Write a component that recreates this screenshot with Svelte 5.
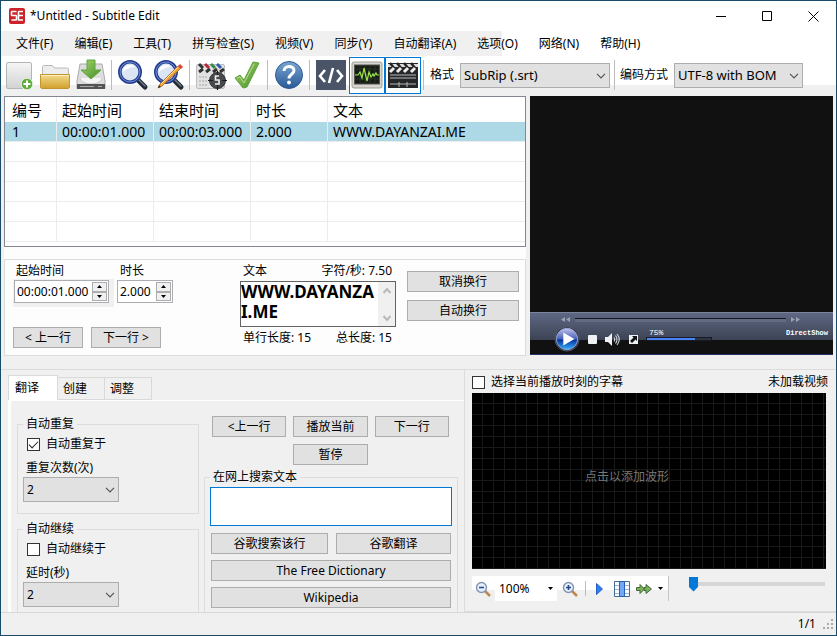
<script>
  const menus = ['文件(F)', '编辑(E)', '工具(T)', '拼写检查(S)', '视频(V)', '同步(Y)', '自动翻译(A)', '选项(O)', '网络(N)', '帮助(H)'];
  const emptyRows = [1, 2, 3, 4, 5];
  const tabs = ['翻译', '创建', '调整'];

  let activeTab = $state('翻译');
  let format = $state('SubRip (.srt)');
  let encoding = $state('UTF-8 with BOM');
  let startTime = $state('00:00:01.000');
  let duration = $state('2.000');
  let text = $state('WWW.DAYANZAI.ME');
  let search = $state('');
  let autoRepeat = $state(true);
  let autoContinue = $state(false);
  let selectCurrent = $state(false);
  let position = $state(0);
</script>

{#snippet chevron()}
  <svg class="chevron" width="10" height="6" viewBox="0 0 10 6"><path d="M1 .8 5 4.8 9 .8" fill="none" stroke="#555" stroke-width="1.2" /></svg>
{/snippet}

{#snippet spinner(label)}
  <span class="spin">
    <button aria-label={label + ' +'}><svg width="5" height="3" viewBox="0 0 5 3"><path d="M0 3 2.5 0 5 3z" /></svg></button>
    <button aria-label={label + ' -'}><svg width="5" height="3" viewBox="0 0 5 3"><path d="M0 0 2.5 3 5 0z" /></svg></button>
  </span>
{/snippet}

{#snippet lens()}
  <path d="m20 20 8 8" stroke="#222c35" stroke-width="5" stroke-linecap="round" />
  <path d="m21 20 7 7" stroke="#71808d" stroke-width="1.3" stroke-linecap="round" />
  <circle cx="13" cy="13" r="10.2" fill="#dce5f4" stroke="#263e91" stroke-width="3.6" />
  <circle cx="13" cy="13" r="10" fill="none" stroke="#6f8fd6" stroke-width="1" />
  <path d="M6 13a7 7 0 0 1 12-5C13 8 9 10 6 13z" fill="#fff" />
{/snippet}

<div class="window">
  <header class="title">
    <svg class="logo" width="16" height="16" viewBox="0 0 16 16">
      <rect width="16" height="16" rx="2" fill="#cc2229" />
      <path d="M7.5 3.5H3L2.5 4v3l.5.5h4l.5.5v3.5l-.5.5H2.500M14 3.500H10L9.500 4v8h4.500M9.500 7.500H14" fill="none" stroke="#fff" stroke-width="1.600" />
    </svg>
    <h1>*Untitled - Subtitle Edit</h1>
    <div class="caption">
      <button aria-label="最小化"><svg width="11" height="11" viewBox="0 0 11 11"><path d="M0 5.5h10" /></svg></button>
      <button aria-label="最大化"><svg width="11" height="11" viewBox="0 0 11 11"><path d="M.5.5h9v9h-9z" /></svg></button>
      <button aria-label="关闭"><svg width="11" height="11" viewBox="0 0 11 11"><path d="m.5.5 10 10m0-10-10 10" /></svg></button>
    </div>
  </header>

  <nav class="menu">
    {#each menus as item}
      <button>{item}</button>
    {/each}
  </nav>

  <div class="toolbar">
    <button class="tool" aria-label="新建">
      <svg width="32" height="32" viewBox="0 0 32 32">
        <defs><linearGradient id="paper" x2="0" y2="1"><stop stop-color="#f6f6f6" /><stop offset="1" stop-color="#d2d2d2" /></linearGradient></defs>
        <rect x="3.500" y="3.500" width="25" height="26" rx="1.500" fill="url(#paper)" stroke="#b5b5b5" />
        <circle cx="24" cy="25" r="5.800" fill="#5fae3c" stroke="#e5f3df" />
        <path d="M24 21.500v7M20.500 25h7" stroke="#fff" stroke-width="2" />
      </svg>
    </button>
    <button class="tool" aria-label="打开">
      <svg width="32" height="32" viewBox="0 0 32 32">
        <defs><linearGradient id="gold" x2="0" y2="1"><stop stop-color="#f4dc8d" /><stop offset="1" stop-color="#d0a02c" /></linearGradient></defs>
        <path d="M3.500 17V7.500l1-1h9l2 2.500h13l1 1V17z" fill="#ededed" stroke="#b9b9b9" />
        <path d="M1.500 15.500h29v13l-1 1h-27l-1-1z" fill="url(#gold)" stroke="#c19631" />
        <path d="M2 16.500h28" stroke="#fff0bb" />
      </svg>
    </button>
    <button class="tool" aria-label="保存">
      <svg width="32" height="32" viewBox="0 0 32 32">
        <defs><linearGradient id="green" x2="1" y2="1"><stop stop-color="#a4d96b" /><stop offset="1" stop-color="#478b2a" /></linearGradient></defs>
        <path d="m5 5-3 17v7.500h28V22L27 5z" fill="#dedede" stroke="#aaa" />
        <path d="M5 19c2 8 20 8 22 0" fill="#f5f5f5" stroke="#c5c5c5" />
        <path d="M2 25h28v5H2z" fill="#555" /><path d="M5 27.500h14m4 0h4" stroke="#aaa" />
        <path d="M12 1h8v10h6L16 20 6 11h6z" fill="url(#green)" stroke="#62a43c" />
      </svg>
    </button>
    <span class="sep"></span>
    <button class="tool" aria-label="查找"><svg width="32" height="32" viewBox="0 0 32 32">{@render lens()}</svg></button>
    <button class="tool" aria-label="替换">
      <svg width="32" height="32" viewBox="0 0 32 32">
        {@render lens()}
        <path d="m5 29 2-4L25 7l2.500 2.500L9 27z" fill="#f3a638" stroke="#a85a1d" stroke-width=".8" /><path d="m8 25 17-17" stroke="#ffe1a0" />
        <path d="m25 7 2-2 3 3-2 2z" fill="#e04343" /><path d="m5 29 1-3 2 2z" fill="#333" />
      </svg>
    </button>
    <span class="sep"></span>
    <button class="tool" aria-label="可视同步">
      <svg width="32" height="32" viewBox="0 0 32 32">
        <rect x="1.500" y="5.500" width="28" height="24" rx="1.500" fill="#e2e2e2" stroke="#bbb" />
        <path d="m4 5 4 4" stroke="#333" stroke-width="3" /><path d="m10 5 4 4" stroke="#b62939" stroke-width="3" />
        <path d="m16 5 4 4" stroke="#368b49" stroke-width="3" /><path d="m22 5 4 4" stroke="#315eae" stroke-width="3" />
        <path d="m4 13 4-3m3 3 4-3m3 3 4-3m3 3 4-3" stroke="#333" stroke-width="3" />
        <path d="M4 18h9M4 22h8M4 26h9" stroke="#c4c4c4" stroke-width="2" stroke-dasharray="2 1" />
        <circle cx="22.500" cy="21.500" r="8" fill="#484b4d" stroke="#303233" />
        <path d="M22.500 12v5m0 9v5M13 21.500h5m9 0h5" stroke="#1c1d1e" stroke-width="1.200" />
        <path d="M24 17h-3.500v4H24v4h-4" fill="none" stroke="#f0f0f0" stroke-width="1.600" />
      </svg>
    </button>
    <button class="tool" aria-label="拼写检查">
      <svg width="32" height="32" viewBox="0 0 32 32"><path d="m4 19 5-3 4 5L22 3l6 1-12 24-4 1z" fill="url(#green)" stroke="#5da13c" stroke-linejoin="round" /><path d="m6 19 3-1 4 6L23 5" fill="none" stroke="#b8dd93" /></svg>
    </button>
    <span class="sep"></span>
    <button class="tool" aria-label="帮助">
      <svg width="32" height="32" viewBox="0 0 32 32">
        <defs><linearGradient id="blue" x2="0" y2="1"><stop stop-color="#7ba6d2" /><stop offset="1" stop-color="#295996" /></linearGradient></defs>
        <circle cx="16" cy="16" r="13.500" fill="url(#blue)" stroke="#2d5d96" />
        <path d="M11 12c0-6 10-6 10-.5 0 4-5 3.500-5 8" fill="none" stroke="#fff" stroke-width="3" /><circle cx="16" cy="23.500" r="1.900" fill="#fff" />
      </svg>
    </button>
    <span class="sep"></span>
    <button class="tool" aria-label="源视图">
      <svg width="32" height="32" viewBox="0 0 32 32"><path d="M1 1h30v30H1z" fill="#4a5467" /><path d="m10 11-5 6 5 6M22 11l5 6-5 6M18 9l-4 15" fill="none" stroke="#fff" stroke-width="2.600" /></svg>
    </button>
    <button class="tool on" aria-label="波形" aria-pressed="true">
      <svg width="32" height="32" viewBox="0 0 32 32">
        <rect x="1" y="3" width="30" height="26" rx="2" fill="#d7d5ce" stroke="#9d9d98" /><rect x="3.500" y="6" width="25" height="19" fill="#171c17" stroke="#555" />
        <path d="M4 10h24M4 15h24M4 20h24M9 6v19m5-19v19m5-19v19m5-19v19" stroke="#2b3427" />
        <path d="M4 16h3l2-3 2 6 2-10 3 13 2-9 2 5 2-3 1 2 2-3 1 2h2" fill="none" stroke="#9ce64b" stroke-width="1.200" />
      </svg>
    </button>
    <button class="tool on" aria-label="视频" aria-pressed="true">
      <svg width="32" height="32" viewBox="0 0 32 32">
        <path d="M1 4h30v25H1z" fill="#252728" /><path d="M1 5h30v3H1z" fill="#ddd" /><path d="m3 4 4 5m3-5 4 5m3-5 4 5m3-5 4 5" stroke="#222" stroke-width="2.500" />
        <path d="m3 13 4-4m3 4 4-4m3 4 4-4m3 4 4-4" stroke="#eee" stroke-width="3" />
        <path d="M3 16h26M3 19h26M3 25h26M12 23v5m8-5v5" stroke="#b9babb" />
      </svg>
    </button>
    <span class="sep"></span>
    <label class="field">格式
      <span class="select format"><select bind:value={format}><option>SubRip (.srt)</option></select>{@render chevron()}</span>
    </label>
    <span class="sep late"></span>
    <label class="field">编码方式
      <span class="select encoding"><select bind:value={encoding}><option>UTF-8 with BOM</option></select>{@render chevron()}</span>
    </label>
  </div>

  <main class="upper">
    <section class="editing">
      <div class="list">
        <table>
          <colgroup><col class="c-num" /><col class="c-time" /><col class="c-time" /><col class="c-dur" /><col /></colgroup>
          <thead><tr><th>编号</th><th>起始时间</th><th>结束时间</th><th>时长</th><th>文本</th></tr></thead>
          <tbody>
            <tr class="selected"><td>1</td><td>00:00:01.000</td><td>00:00:03.000</td><td>2.000</td><td>WWW.DAYANZAI.ME</td></tr>
            {#each emptyRows as row (row)}
              <tr><td></td><td></td><td></td><td></td><td></td></tr>
            {/each}
          </tbody>
        </table>
      </div>

      <div class="edit">
        <div class="times">
          <div class="timeRow">
            <div class="start">
              <label for="start">起始时间</label>
              <div class="shade"><div class="updown"><input id="start" bind:value={startTime} />{@render spinner('起始时间')}</div></div>
            </div>
            <div class="dur">
              <label for="dur">时长</label>
              <div class="updown"><input id="dur" bind:value={duration} />{@render spinner('时长')}</div>
            </div>
          </div>
          <div class="nav"><button class="btn">&lt; 上一行</button><button class="btn">下一行 &gt;</button></div>
        </div>
        <div class="textPart">
          <div class="line"><label for="text">文本</label><span>字符/秒: 7.50</span></div>
          <div class="textbox">
            <textarea id="text" bind:value={text}></textarea>
            <div class="scroll">
              <svg width="8" height="6" viewBox="0 0 8 6"><path d="m.5 5 3.500-4 3.500 4" /></svg>
              <svg width="8" height="6" viewBox="0 0 8 6"><path d="m.5 1 3.500 4 3.500-4" /></svg>
            </div>
          </div>
          <div class="line"><span>单行长度: 15</span><span>总长度: 15</span></div>
        </div>
        <div class="breaks"><button class="btn">取消换行</button><button class="btn">自动换行</button></div>
      </div>
    </section>

    <section class="video">
      <div class="screen"></div>
      <div class="player">
        <div class="seek">
          <svg width="9" height="5" viewBox="0 0 9 5"><path d="M4 0v5L0 2.500zm5 0v5L5 2.500z" /></svg>
          <span class="rail"></span>
          <svg width="9" height="5" viewBox="0 0 9 5"><path d="M0 0v5l4-2.500zm5 0v5l4-2.500z" /></svg>
        </div>
        <div class="controls">
          <button class="play" aria-label="播放">
            <svg width="26" height="26" viewBox="0 0 28 28">
              <defs><linearGradient id="orb" x2="0" y2="1"><stop stop-color="#c0c4ed" /><stop offset=".48" stop-color="#4a63b8" /><stop offset=".55" stop-color="#0733a0" /><stop offset="1" stop-color="#37b5ff" /></linearGradient></defs>
              <circle cx="14" cy="14" r="13" fill="#171d2c" stroke="#555d6e" /><circle cx="14" cy="14" r="11.500" fill="url(#orb)" stroke="#9eaad7" /><path d="m10 7 12 7-12 7z" fill="#fff" />
            </svg>
          </button>
          <button aria-label="停止"><svg width="9" height="9" viewBox="0 0 9 9"><rect width="9" height="9" rx="1" fill="#f0f1f5" /></svg></button>
          <button aria-label="静音"><svg width="16" height="13" viewBox="0 0 16 13"><path d="M0 4h3l4-4v13L3 9H0z" fill="#f1f1f4" /><path d="M9 4.500q1.500 2 0 4m1.500-6q3 4 0 8M12 1q4.500 5.500 0 11" fill="none" stroke="#d6d8df" stroke-width="1.100" /></svg></button>
          <button aria-label="全屏"><svg width="9" height="9" viewBox="0 0 9 9"><path d="M0 0h9v9H0z" fill="#edf0f5" /><path d="M3 1h5v5L6.500 4.500 3 8 1 6l3.500-3.500z" fill="#111" /></svg></button>
          <div class="volume"><span>75%</span><i></i></div>
          <span class="engine">DirectShow</span>
        </div>
      </div>
    </section>
  </main>

  <div class="lower">
    <section class="left">
      <div class="tabs" role="tablist">
        {#each tabs as tab}
          <button role="tab" aria-selected={activeTab === tab} class:active={activeTab === tab} onclick={() => (activeTab = tab)}>{tab}</button>
        {/each}
      </div>
      <div class="page">
        <div class="autos">
          <fieldset>
            <legend>自动重复</legend>
            <label class="check"><input type="checkbox" bind:checked={autoRepeat} />自动重复于</label>
            <label class="caption-label" for="repeat">重复次数(次)</label>
            <span class="select count"><select id="repeat"><option>2</option></select>{@render chevron()}</span>
          </fieldset>
          <fieldset class="last">
            <legend>自动继续</legend>
            <label class="check"><input type="checkbox" bind:checked={autoContinue} />自动继续于</label>
            <label class="caption-label" for="delay">延时(秒)</label>
            <span class="select count"><select id="delay"><option>2</option></select>{@render chevron()}</span>
          </fieldset>
        </div>
        <div class="actions">
          <div class="playRow">
            <button class="btn">&lt;上一行</button><button class="btn">播放当前</button><button class="btn">下一行</button>
            <button class="btn pause">暂停</button>
          </div>
          <fieldset class="web last">
            <legend>在网上搜索文本</legend>
            <textarea aria-label="在网上搜索文本" bind:value={search}></textarea>
            <div class="webButtons">
              <button class="btn">谷歌搜索该行</button><button class="btn">谷歌翻译</button>
              <button class="btn wide">The Free Dictionary</button>
              <button class="btn wide">Wikipedia</button>
            </div>
          </fieldset>
        </div>
      </div>
    </section>

    <section class="right">
      <div class="waveHead">
        <label class="check"><input type="checkbox" bind:checked={selectCurrent} />选择当前播放时刻的字幕</label>
        <span>未加载视频</span>
      </div>
      <button class="wave">点击以添加波形</button>
      <div class="waveTools">
        <div class="strip">
          <button aria-label="缩小"><svg width="16" height="16" viewBox="0 0 16 16"><path d="m10 10 5 5" stroke="#bd8752" stroke-width="2.500" /><circle cx="6.500" cy="6.500" r="5" fill="#e5efff" stroke="#8395ae" stroke-width="1.400" /><path d="M4 6.500h5" stroke="#294d83" stroke-width="1.600" /></svg></button>
          <span class="zoom"><select aria-label="缩放"><option>100%</option></select><svg width="5" height="3" viewBox="0 0 5 3"><path d="M0 0h5L2.500 3z" /></svg></span>
          <button aria-label="放大"><svg width="16" height="16" viewBox="0 0 16 16"><path d="m10 10 5 5" stroke="#bd8752" stroke-width="2.500" /><circle cx="6.500" cy="6.500" r="5" fill="#e5efff" stroke="#8395ae" stroke-width="1.400" /><path d="M4 6.500h5M6.500 4v5" stroke="#294d83" stroke-width="1.600" /></svg></button>
          <span class="sep"></span>
          <button aria-label="播放"><svg width="7" height="12" viewBox="0 0 7 12"><path d="M.5.5v11l6-5.500z" fill="#2d80ed" stroke="#2461ca" /></svg></button>
          <button class="film" aria-label="居中"><svg width="16" height="16" viewBox="0 0 16 16"><path d="M.5.500h15v15H.5z" fill="#f8faff" stroke="#456b9b" /><path d="M1 4.500h14M1 8.500h14M1 12.500h14" stroke="#9db3d2" /><path d="M5.500.500h5v15h-5z" fill="#75a8f2" stroke="#2860b4" /></svg></button>
          <button aria-label="播放速度"><svg width="16" height="12" viewBox="0 0 16 12"><path d="M.5 4.500H4V1.500L8.500 6 4 10.500v-3H.5zM8 4.500h2v-3l5.500 4.500-5.500 4.500v-3H8z" fill="#79b45b" stroke="#49663d" /></svg></button>
          <svg class="drop" width="5" height="3" viewBox="0 0 5 3"><path d="M0 0h5L2.500 3z" /></svg>
        </div>
        <input class="pos" type="range" aria-label="播放位置" min="0" max="100" bind:value={position} />
      </div>
    </section>
  </div>

  <footer>
    <span>1/1</span>
    <svg width="11" height="11" viewBox="0 0 11 11"><path d="M8 0h2v2H8zM4 4h2v2H4zm4 0h2v2H8zM0 8h2v2H0zm4 0h2v2H4zm4 0h2v2H8z" fill="#aaa" /></svg>
  </footer>
</div>

<style>
  :global(body) { background: #f0f0f0; }

  .window {
    box-sizing: border-box;
    min-height: 100vh;
    display: flex;
    flex-direction: column;
    border: 1px solid #194c6b;
    background: #f0f0f0;
    color: #000;
    font: 12px/16px "Noto Sans", "Noto Sans CJK SC", sans-serif;
  }
  .window *, .window *::before { box-sizing: border-box; }
  button, input, select, textarea { font: inherit; color: inherit; margin: 0; border-radius: 0; }
  button { padding: 0; border: 0; background: none; white-space: nowrap; }
  svg { display: block; flex: none; }
  h1 { margin: 0; font-size: 12px; font-weight: 400; }

  .title { display: flex; align-items: center; height: 30px; padding-left: 8px; background: #fff; }
  .title h1 { flex: 1; margin-left: 5px; }
  .caption { display: flex; }
  .caption button { width: 46px; height: 28px; display: flex; align-items: center; justify-content: center; }
  .caption path { fill: none; stroke: #000; }

  .menu {
    display: flex;
    gap: 21px;
    height: 25px;
    padding-left: 15px;
    background: linear-gradient(90deg, #f0f0f0 60%, #fff 60%);
  }

  .toolbar { display: flex; align-items: center; height: 38px; background: linear-gradient(#fff 29px, #f0f0f0 29px); }
  .tool { width: 36px; height: 38px; flex: none; display: flex; align-items: center; justify-content: center; }
  .on { border: 1px solid #0078d7; background: #fff; height: 37px; }
  .sep { flex: none; width: 1px; height: 30px; margin: 0 3px 0 2px; background: #bdbdbd; }
  .late { margin: 0 5px 0 4px; }
  .field { display: flex; align-items: center; gap: 6px; white-space: nowrap; }
  .sep + .field { margin-left: 3px; }
  .late + .field { margin-left: 0; }
  .select { position: relative; display: block; height: 25px; }
  .select select { appearance: none; width: 100%; height: 100%; padding: 0 3px; border: 1px solid #adadad; background: #e1e1e1; }
  .toolbar select { font-size: 13px; }
  .chevron { position: absolute; right: 4px; top: 10px; pointer-events: none; }
  .format { width: 150px; }
  .encoding { width: 129px; }

  .upper { display: grid; grid-template-columns: 522fr 303fr; gap: 4px; padding: 2px 3px 0; }
  .editing { min-width: 0; background: #fdfdfd; }
  .list { height: 151px; border: 1px solid #828790; background: #fff; overflow: hidden; }
  table { width: 100%; border-collapse: separate; border-spacing: 0; table-layout: fixed; font-size: 14px; line-height: 18px; }
  .c-num { width: 52px; }
  .c-time { width: 97px; }
  .c-dur { width: 77px; }
  th, td { padding: 0 0 0 5px; text-align: left; font-weight: 400; border-right: 1px solid #ececec; white-space: nowrap; }
  th:first-child, td:first-child { padding-left: 7px; }
  th:last-child, td:last-child { border-right: 0; }
  th { height: 25px; font-size: 15px; }
  td { height: 20px; border-bottom: 1px solid #ececec; }
  .selected td { background: #add8e6; }

  .edit { display: flex; height: 97px; margin-top: 12px; padding: 3px 6px 0 8px; border: 1px solid #dcdcdc; }
  .times { width: 227px; flex: none; }
  .timeRow { display: flex; gap: 3px; height: 64px; }
  .timeRow label { display: block; padding: 0 3px; }
  .shade { width: 101px; height: 28px; padding: 1px 5px 4px 1px; background: #f0f0f0; }
  .updown { display: flex; width: 95px; height: 23px; border: 1px solid #abadb3; background: #fff; padding: 1px; }
  .updown input { flex: 1; min-width: 0; border: 0; padding: 0 1px; background: none; }
  .dur .updown { width: 56px; margin-top: 1px; }
  .spin { display: flex; flex-direction: column; width: 15px; flex: none; }
  .spin button { flex: 1; display: flex; align-items: center; justify-content: center; border: 1px solid #adadad; background: #f0f0f0; }
  .btn { height: 21px; padding-top: 1px; border: 1px solid #adadad; background: #e1e1e1; line-height: 18px; }
  .nav { display: flex; gap: 8px; }
  .nav .btn { width: 70px; }
  .textPart { width: 156px; flex: none; }
  .line { display: flex; justify-content: space-between; padding: 0 4px 0 3px; }
  .textbox { display: flex; height: 46px; margin: 2px 0 3px; border: 1px solid #646464; background: #fff; }
  .textbox textarea { flex: 1; min-width: 0; border: 0; padding: 0; resize: none; overflow: hidden; word-break: break-all; font-size: 17px; line-height: 20px; font-weight: 700; }
  .scroll { width: 17px; display: flex; flex-direction: column; align-items: center; justify-content: space-between; padding: 6px 0 5px; background: #f0f0f0; }
  .scroll path { fill: none; stroke: #b8b8b8; stroke-width: 2; }
  .breaks { flex: 1; display: flex; flex-direction: column; gap: 8px; margin: 8px 0 0 11px; }

  .video { display: flex; flex-direction: column; margin-bottom: 1px; background: #111; border-bottom: 1px solid #253066; }
  .screen { flex: 1; }
  .player { height: 42px; padding: 4px 5px 0 24px; border-top: 1px solid #7b849b; background: linear-gradient(#5e6883, #3c4354 27px, #111 27px); }
  .seek { display: flex; align-items: center; gap: 5px; padding: 0 28px 0 7px; height: 5px; fill: #9ca2b1; }
  .rail { flex: 1; height: 4px; border-top: 1px solid #161a24; background: #626b81; }
  .controls { display: flex; align-items: center; gap: 8px; color: #fff; height: 34px; }
  .volume { width: 66px; font: 8px/9px "Liberation Mono", monospace; padding-left: 3px; margin-bottom: 10px; }
  .volume i { display: block; height: 4px; margin-left: -3px; border: 1px solid #171b27; background: linear-gradient(90deg, #4a83f5 75%, #30343d 75%); }
  .engine { margin: 0 0 12px auto; font: bold 7px/9px "Liberation Mono", monospace; }

  .lower { flex: 1; display: grid; grid-template-columns: 464fr 371fr; margin-top: 13px; border-top: 1px solid #dcdcdc; }
  .left { padding: 5px 0 0 7px; border-right: 1px solid #dcdcdc; display: flex; flex-direction: column; min-width: 0; }
  .tabs { display: flex; align-items: flex-end; height: 25px; }
  .tabs button { width: 47px; height: 23px; border: 1px solid #d9d9d9; border-left: 0; background: #f0f0f0; padding-right: 12px; }
  .tabs .active { width: 50px; height: 25px; background: #fff; border: 1px solid #d9d9d9; border-bottom: 0; }
  .page { flex: 1; display: flex; gap: 5px; border-left: 3px solid #fff; border-top: 1px solid #fff; padding: 15px 6px 0 6px; }
  .autos { width: 182px; flex: none; display: flex; flex-direction: column; gap: 7px; }
  fieldset { min-width: 0; margin: 0; padding: 0 5px 11px; border: 1px solid #dcdcdc; }
  fieldset.last { border-bottom: 0; flex: 1; padding-bottom: 3px; }
  legend { padding: 0 3px; }
  .check { display: flex; align-items: center; gap: 6px; }
  .check input { appearance: none; width: 13px; height: 13px; border: 1px solid #333; background: #fff; }
  .check input:checked::before { content: ""; display: block; width: 9px; height: 5px; margin: 2px 1px; border: solid #222; border-width: 0 0 1px 1px; transform: rotate(-45deg); }
  fieldset .check { margin: 4px 4px 0; }
  .caption-label { display: block; margin: 8px 3px 1px; }
  .count { width: 96px; }

  .actions { flex: 1; min-width: 0; display: flex; flex-direction: column; }
  .playRow { display: grid; grid-template-columns: repeat(3, 1fr); gap: 7px; padding: 0 9px 0 8px; }
  .pause { grid-column: 2; }
  .web { margin-top: 4px; padding: 0 5px 3px; }
  .web legend { padding: 0 3px; }
  .web textarea { display: block; width: 100%; height: 39px; margin-top: 2px; border: 1px solid #0078d7; resize: none; }
  .webButtons { display: grid; grid-template-columns: 118fr 116fr; gap: 6px 8px; margin-top: 7px; padding: 0 1px; }
  .wide { grid-column: span 2; }

  .right { padding: 4px 8px 10px 7px; border-bottom: 1px solid #dcdcdc; display: flex; flex-direction: column; min-width: 0; }
  .waveHead { display: flex; justify-content: space-between; padding-bottom: 3px; }
  .wave {
    flex: 1;
    margin-right: 2px;
    padding: 0 44px 8px 0;
    color: #777;
    background: repeating-linear-gradient(90deg, transparent 0 10px, #191919 10px 11px), repeating-linear-gradient(transparent 0 10px, #191919 10px 11px), #000;
  }
  .waveTools { display: flex; align-items: flex-start; gap: 20px; margin-top: 7px; padding-right: 3px; }
  .strip { display: flex; align-items: center; height: 25px; padding: 0 3px 0 3px; border-right: 1px solid #c5c5c5; background: linear-gradient(#fff 14px, #f0f0f0 14px); }
  .zoom { display: flex; align-items: center; width: 62px; height: 25px; margin: 0 5px 0 4px; background: #fff; }
  .zoom select { appearance: none; width: 53px; border: 0; padding: 0 4px; background: transparent; }
  .strip .sep { height: 15px; margin: 0 10px 0 7px; }
  .film { margin: 0 6px 0 11px; }
  .drop { margin: 0 2px 0 6px; }
  .pos { appearance: none; flex: 1; min-width: 0; height: 16px; margin: 0; background: linear-gradient(#d6d6d6, #d6d6d6) center / 100% 4px no-repeat; }
  .pos::-webkit-slider-thumb { appearance: none; width: 9px; height: 15px; background: #0078d7; clip-path: polygon(0 0, 100% 0, 100% 70%, 50% 100%, 0 70%); }

  footer { display: flex; align-items: center; justify-content: flex-end; gap: 7px; height: 23px; padding-right: 2px; border-top: 1px solid #d7d7d7; }
</style>
